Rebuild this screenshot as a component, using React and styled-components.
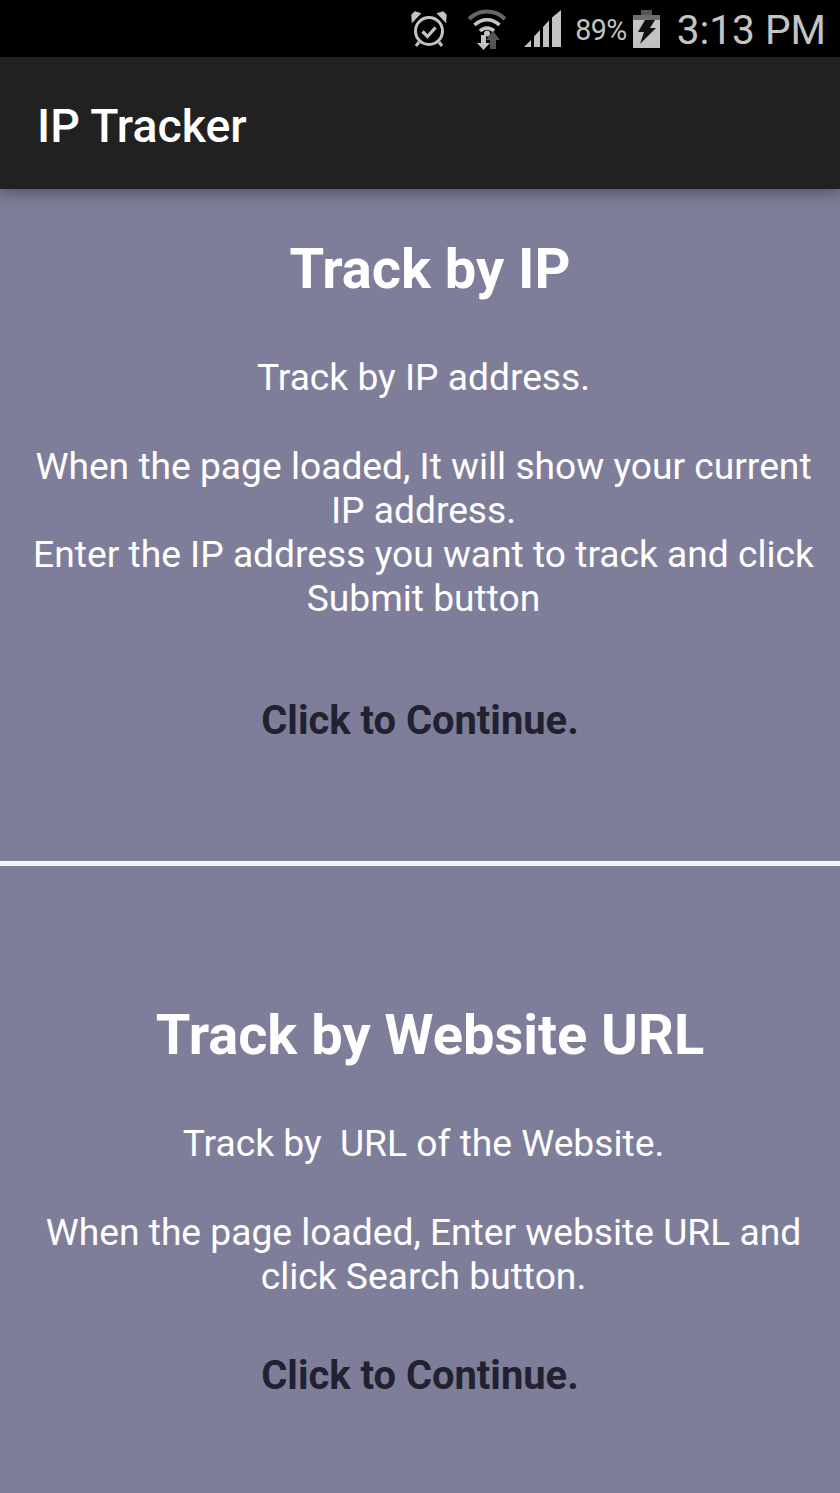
import React from "react";
import styled, { createGlobalStyle } from "styled-components";

const Global = createGlobalStyle`
  html, body { margin: 0; padding: 0; background: #7f7e9a; }
  body { font-family: Roboto, "Liberation Sans", sans-serif; }
`;
const Page = styled.div`
  width: 840px; height: 1493px; overflow: hidden; display: flex; flex-direction: column; background: #7f7e9a;
`;
const StatusBar = styled.div`
  height: 57px; flex: none; background: #000; display: flex; align-items: center; justify-content: flex-end;
  color: #c4c4c4; padding-right: 14px; box-sizing: border-box;
`;
const Icon = styled.svg`
  flex: none; display: block; margin-left: ${p => p.$ml}px;
`;
const Percent = styled.span`
  font-size: 28.6px; letter-spacing: -0.6px; margin-left: 13px; line-height: 57px; position: relative; top: 2px;
`;
const Clock = styled.span`
  font-size: 40.6px; margin-left: 17px; line-height: 57px; font-weight: 400; color: #c4c4c4; position: relative; top: 2px;
`;
const AppBar = styled.header`
  height: 132px; flex: none; background: #212121; display: flex; align-items: center; padding: 5px 0 0 37px;
  box-sizing: border-box; color: #fff; font-size: 46.4px; font-weight: 500; position: relative; z-index: 1;
  box-shadow: 0 3px 16px rgba(0,0,0,.4);
`;
const Section = styled.section`
  height: ${p => p.$h}px; flex: none; box-sizing: border-box; padding-top: ${p => p.$pt}px; text-align: center; color: #fff;
`;
const Title = styled.h2`
  margin: 0; font-size: 56px; line-height: 60px; font-weight: 700; padding-left: 20px;
`;
const Body = styled.p`
  margin: ${p => p.$mt}px 0 0; font-size: 37.2px; line-height: 44.3px; font-weight: 400; padding: 0 17px 0 24px;
  white-space: pre-wrap;
`;
const Continue = styled.p`
  margin: ${p => p.$mt}px 0 0; font-size: 39.9px; line-height: 44px; font-weight: 700; color: #212130;
`;
const Divider = styled.hr`
  margin: 0; border: 0; height: 5px; flex: none; background: #f4f3f8;
`;

const Alarm = () => (
  <Icon $ml={0} width="38" height="38" viewBox="0 0 38 38" fill="none" stroke="#c4c4c4" strokeWidth="3">
    <circle cx="19" cy="21" r="13.5" />
    <path d="M12.5 21.5l5 5 8-9" strokeWidth="3.2" />
    <path d="M2.5 11.5L10 3.5 5 2 2 5zM35.5 11.5L28 3.5 33 2 36 5z" fill="#c4c4c4" strokeWidth="1.5" />
    <path d="M9 32l-3 4M29 32l3 4" />
  </Icon>
);
const Wifi = () => (
  <Icon $ml={19} width="40" height="42" viewBox="0 0 40 42" fill="none">
    <path d="M2 11C12 1 28 1 38 11" stroke="#666" strokeWidth="4" />
    <path d="M7.5 17C15 10 25 10 32.500 17" stroke="#c4c4c4" strokeWidth="3.6" />
    <path d="M13 23C17 19 23 19 27 23" stroke="#c4c4c4" strokeWidth="3.4" />
    <circle cx="20" cy="25.500" r="3" fill="#c4c4c4" />
    <path d="M14 27h5v8h4l-6.500 7L10 35h4z" fill="#c4c4c4" />
    <path d="M26 23l7 9h-4v9h-6v-9h-4z" fill="#555" />
  </Icon>
);
const Signal = () => (
  <Icon $ml={17} width="38" height="38" viewBox="0 0 38 38" fill="#c4c4c4">
    <path d="M0 37L7 30V37zM10 26.500L16 20V37H10zM19 17L25 10.500V37H19zM28 7.500L37 0V37H28z" />
  </Icon>
);
const Battery = () => (
  <Icon $ml={6} width="27" height="38" viewBox="0 0 27 38">
    <path d="M8 0h11v5H8z" fill="#555" />
    <path d="M0 5h27v5H0z" fill="#6e6e6e" />
    <path d="M0 10h27v28H0z" fill="#c4c4c4" />
    <path d="M12 10h10l-5 8h6L7 34l4-12H5z" fill="#111" />
  </Icon>
);

export default function App() {
  return (
    <Page>
      <Global />
      <StatusBar>
        <Alarm />
        <Wifi />
        <Signal />
        <Percent>89%</Percent>
        <Battery />
        <Clock>3:13 PM</Clock>
      </StatusBar>
      <AppBar>IP Tracker</AppBar>
      <Section $h={672} $pt={50}>
        <Title>Track by IP</Title>
        <Body $mt={56}>{"Track by IP address.\n\nWhen the page loaded, It will show your current\nIP address.\nEnter the IP address you want to track and click\nSubmit button"}</Body>
        <Continue $mt={78}>Click to Continue.</Continue>
      </Section>
      <Divider />
      <Section $h={627} $pt={139}>
        <Title>Track by Website URL</Title>
        <Body $mt={56}>{"Track by  URL of the Website.\n\nWhen the page loaded, Enter website URL and\nclick Search button."}</Body>
        <Continue $mt={56}>Click to Continue.</Continue>
      </Section>
    </Page>
  );
}
